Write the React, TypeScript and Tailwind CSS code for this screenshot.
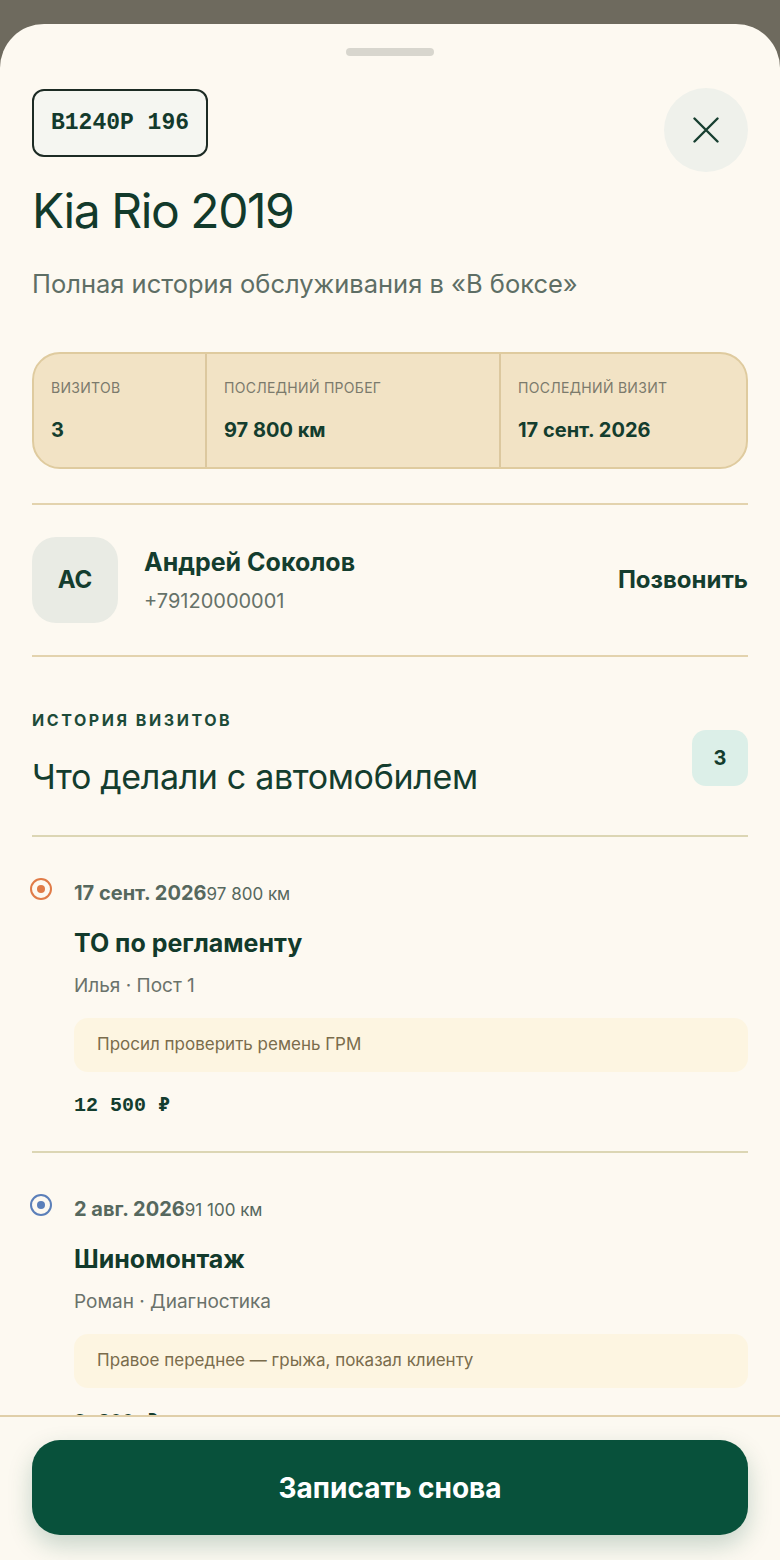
const visits = [
  {
    date: "17 сент. 2026",
    km: "97 800 км",
    title: "ТО по регламенту",
    meta: "Илья · Пост 1",
    note: "Просил проверить ремень ГРМ",
    price: "12 500 ₽",
    dot: "border-[#e07b47]",
    dotInner: "bg-[#e07b47]",
  },
  {
    date: "2 авг. 2026",
    km: "91 100 км",
    title: "Шиномонтаж",
    meta: "Роман · Диагностика",
    note: "Правое переднее — грыжа, показал клиенту",
    price: "3 200 ₽",
    dot: "border-[#5b7fb9]",
    dotInner: "bg-[#5b7fb9]",
  },
];

function StatCell({ label, value, last }: { label: string; value: string; last?: boolean }) {
  return (
    <div className={`flex flex-col px-[17px] pt-[26px] pb-[25px] ${last ? "" : "border-r-2 border-[#dcc89f]"}`}>
      <span className="text-[14px] uppercase leading-4 tracking-[0.02em] text-[#7b7a6c]">{label}</span>
      <span className="mt-[22px] text-[20px] font-bold leading-6 text-[#143d2e]">{value}</span>
    </div>
  );
}

export default function App() {
  return (
    <div
      className="flex h-[1560px] w-[780px] flex-col overflow-hidden bg-[#6e6a5e] text-[#143d2e]"
      style={{ fontFamily: "Inter, 'Noto Sans', sans-serif" }}
    >
      <div className="mt-6 flex min-h-0 flex-1 flex-col overflow-hidden rounded-t-[44px] bg-[#fdf9f1]">
        <div className="min-h-0 flex-1 overflow-hidden px-8">
          <div className="flex justify-center pt-6">
            <div className="h-2 w-[88px] rounded-full bg-[#d8d6ce]" />
          </div>

          {/* header */}
          <div className="mt-8 flex items-start justify-between">
            <div className="mt-[1px] flex h-[68px] items-center rounded-[12px] border-2 border-[#1c2b24] bg-[#f5f6f1] px-[17px]">
              <span
                className="text-[23px] font-bold text-[#133a2c]"
                style={{ fontFamily: "'Liberation Mono', monospace" }}
              >
                В1240Р 196
              </span>
            </div>
            <button className="flex h-[84px] w-[84px] items-center justify-center rounded-full bg-[#eff1eb]">
              <svg width="26" height="26" viewBox="0 0 26 26" fill="none" stroke="#173f30" strokeWidth="2.4" strokeLinecap="round">
                <path d="M1.5 1.5 24.5 24.5M24.5 1.5 1.5 24.5" />
              </svg>
            </button>
          </div>

          <h1 className="mt-3 text-[48px] font-normal leading-[53px] tracking-[-0.03em] text-[#123a2b]">Kia Rio 2019</h1>
          <p className="mt-[30px] text-[25.5px] leading-[33px] text-[#5e6e65]">Полная история обслуживания в «В боксе»</p>

          {/* stats */}
          <div className="mt-[52px] grid grid-cols-[173px_294px_1fr] overflow-hidden rounded-[28px] border-2 border-[#dfcb9f] bg-[#f2e3c5]">
            <StatCell label="Визитов" value="3" />
            <StatCell label="Последний пробег" value="97 800 км" />
            <StatCell label="Последний визит" value="17 сент. 2026" last />
          </div>

          {/* client */}
          <div className="mt-[34px] border-t-2 border-[#e3d3ae] pt-[32px] pb-[32px]">
            <div className="flex items-center gap-[26px]">
              <div className="flex h-[86px] w-[86px] items-center justify-center rounded-[24px] bg-[#e9ebe4] text-[24px] font-bold text-[#143d2e]">
                АС
              </div>
              <div className="flex flex-1 flex-col">
                <span className="text-[25px] font-bold leading-7 text-[#143d2e]">Андрей Соколов</span>
                <span className="mt-[13px] text-[20px] leading-6 text-[#667269]">+79120000001</span>
              </div>
              <button className="text-[24px] font-bold text-[#143d2e]">Позвонить</button>
            </div>
          </div>

          {/* history header */}
          <div className="border-t-2 border-[#e3d3ae] pt-[53px] pb-[38px]">
            <div className="flex items-center justify-between">
              <div className="flex flex-col">
                <span className="text-[16px] font-bold uppercase leading-5 tracking-[0.16em] text-[#1d4b39]">История визитов</span>
                <span className="mt-[27px] text-[34px] leading-10 tracking-[-0.01em] text-[#143d2e]">Что делали с автомобилем</span>
              </div>
              <div className="mb-[-8px] flex h-14 w-14 items-center justify-center rounded-[14px] bg-[#dcefe8] text-[20px] font-bold text-[#143d2e]">
                3
              </div>
            </div>
          </div>

          {/* visits */}
          {visits.map((v) => (
            <div key={v.title} className="border-t-2 border-[#dcd6b4] pt-[44px] pb-[33px]">
              <div className="flex gap-[22px]">
                <div className={`-ml-[2px] mt-[-3px] flex h-[22px] w-[22px] shrink-0 items-center justify-center rounded-full border-2 ${v.dot}`}>
                  <div className={`h-[8px] w-[8px] rounded-full ${v.dotInner}`} />
                </div>
                <div className="flex flex-1 flex-col">
                  <div className="text-[17px] leading-6 text-[#56685e]">
                    <span className="text-[20px] font-bold">{v.date}</span>
                    <span>{v.km}</span>
                  </div>
                  <span className="mt-[21px] text-[25px] font-bold leading-8 text-[#123a2b]">{v.title}</span>
                  <span className="mt-[15px] text-[19px] leading-6 text-[#6a726b]">{v.meta}</span>
                  <div className="mt-[20px] flex h-[54px] items-center rounded-[14px] bg-[#fdf5e1] px-[23px] text-[17px] text-[#7a6c4c]">
                    {v.note}
                  </div>
                  <span
                    className="mt-[22px] text-[20px] font-bold leading-6 text-[#143d2e]"
                    style={{ fontFamily: "'Liberation Mono', monospace" }}
                  >
                    {v.price}
                  </span>
                </div>
              </div>
            </div>
          ))}
        </div>

        {/* footer */}
        <div className="border-t-2 border-[#e0cfa9] bg-[#fcf9f1] px-8 pt-[23px] pb-[25px]">
          <button className="flex h-[95px] w-full items-center justify-center rounded-[28px] bg-[#08513b] text-[28px] font-bold text-white shadow-[0_10px_24px_rgba(8,81,59,0.22)]">
            Записать снова
          </button>
        </div>
      </div>
    </div>
  );
}
